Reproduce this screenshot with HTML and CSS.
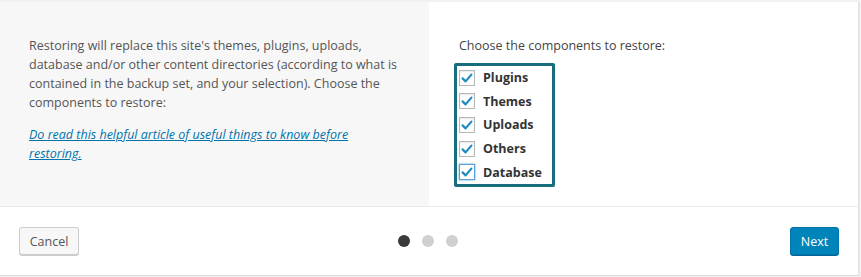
FILE: index.html
```html
<!DOCTYPE html>
<html>
<head>
<meta charset="utf-8">
<link rel="stylesheet" href="styles.css">
</head>
<body>
<div class="modal">
  <div class="content">
    <div class="col-left">
      <p class="intro">Restoring will replace this site's themes, plugins, uploads, database and/or other content directories (according to what is contained in the backup set, and your selection). Choose the components to restore:</p>
      <p class="help"><a href="#">Do read this helpful article of useful things to know before restoring.</a></p>
    </div>
    <div class="col-right">
      <p class="choose">Choose the components to restore:</p>
      <div class="components">
        <label class="comp"><span class="cb"><svg viewBox="0 0 16 16" width="16" height="16"><path d="M3.6 8.4 L6.6 11.4 L12.4 4.6" fill="none" stroke="#1e8cbe" stroke-width="2.2" stroke-linecap="round" stroke-linejoin="round"/></svg></span>Plugins</label>
        <label class="comp"><span class="cb"><svg viewBox="0 0 16 16" width="16" height="16"><path d="M3.6 8.4 L6.6 11.4 L12.4 4.6" fill="none" stroke="#1e8cbe" stroke-width="2.2" stroke-linecap="round" stroke-linejoin="round"/></svg></span>Themes</label>
        <label class="comp"><span class="cb"><svg viewBox="0 0 16 16" width="16" height="16"><path d="M3.6 8.4 L6.6 11.4 L12.4 4.6" fill="none" stroke="#1e8cbe" stroke-width="2.2" stroke-linecap="round" stroke-linejoin="round"/></svg></span>Uploads</label>
        <label class="comp"><span class="cb"><svg viewBox="0 0 16 16" width="16" height="16"><path d="M3.6 8.4 L6.6 11.4 L12.4 4.6" fill="none" stroke="#1e8cbe" stroke-width="2.2" stroke-linecap="round" stroke-linejoin="round"/></svg></span>Others</label>
        <label class="comp"><span class="cb focus"><svg viewBox="0 0 16 16" width="16" height="16"><path d="M3.6 8.4 L6.6 11.4 L12.4 4.6" fill="none" stroke="#1e8cbe" stroke-width="2.2" stroke-linecap="round" stroke-linejoin="round"/></svg></span>Database</label>
      </div>
    </div>
  </div>
  <div class="footer">
    <div class="left"><button class="btn cancel">Cancel</button></div>
    <div class="dots"><span class="dot active"></span><span class="dot"></span><span class="dot"></span></div>
    <div class="right"><button class="btn next">Next</button></div>
  </div>
</div>
</body>
</html>
```

FILE: styles.css
```css
html, body {
  margin: 0;
  padding: 0;
}
body {
  background: #f1f1f1;
  padding-top: 2px;
  font-family: "Open Sans", "Noto Sans", sans-serif;
  font-size: 12.5px;
  color: #444;
}
.modal {
  width: 858px;
  background: #fff;
  border-right: 1px solid #e2e2e2;
  box-shadow: 0 1px 1px rgba(0,0,0,0.15);
  border-bottom: 1px solid #dcdcdc;
}
.content {
  display: flex;
  height: 204px;
  border-bottom: 1px solid #eaeaea;
}
.col-left {
  width: 429px;
  background: #f7f7f7;
  padding: 34px 30px 0 29px;
  box-sizing: border-box;
}
.col-right {
  flex: 1;
  background: #fff;
  padding: 34px 20px 0 30px;
  box-sizing: border-box;
}
p {
  margin: 0;
  line-height: 19px;
}
.intro {
  color: #555;
}
.help {
  margin-top: 13px;
}
.help a {
  color: #0073aa;
  font-style: italic;
  text-decoration: underline;
}
.choose {
  color: #444;
}
.components {
  display: inline-flex;
  flex-direction: column;
  border: 3px solid #176d7b;
  border-radius: 2px;
  margin-top: 8px;
  margin-left: -5px;
  padding: 0 10px 0 2px;
}
.comp {
  display: flex;
  align-items: center;
  height: 23.6px;
  font-weight: 700;
  color: #333;
}
.cb {
  width: 16px;
  height: 16px;
  border: 1px solid #b4b9be;
  box-sizing: border-box;
  background: #fff;
  margin-right: 8px;
  display: flex;
  align-items: center;
  justify-content: center;
  box-shadow: inset 0 1px 2px rgba(0,0,0,0.1);
}
.cb svg {
  flex: none;
}
.cb.focus {
  border-color: #5b9dd9;
  box-shadow: 0 0 2px rgba(30,140,190,0.8);
}
.footer {
  display: grid;
  grid-template-columns: 1fr auto 1fr;
  align-items: center;
  height: 68px;
  padding: 0 19px 0 19px;
}
.right {
  display: flex;
  justify-content: flex-end;
}
.btn {
  height: 28px;
  font-family: "Open Sans", "Noto Sans", sans-serif;
  font-size: 12.5px;
  border-radius: 3px;
  padding: 0;
  cursor: pointer;
}
.cancel {
  background: #f7f7f7;
  border: 1px solid #ccc;
  color: #555;
  box-shadow: 0 1px 0 #ccc;
  width: 60px;
}
.next {
  background: #0085ba;
  border: 1px solid #0073aa;
  color: #fff;
  box-shadow: 0 1px 0 #006799;
  width: 49px;
}
.dots {
  display: flex;
  gap: 12px;
  margin-left: -3px;
}
.dot {
  width: 12px;
  height: 12px;
  border-radius: 50%;
  background: #d0d0d0;
}
.dot.active {
  background: #3a3a3a;
}
```
